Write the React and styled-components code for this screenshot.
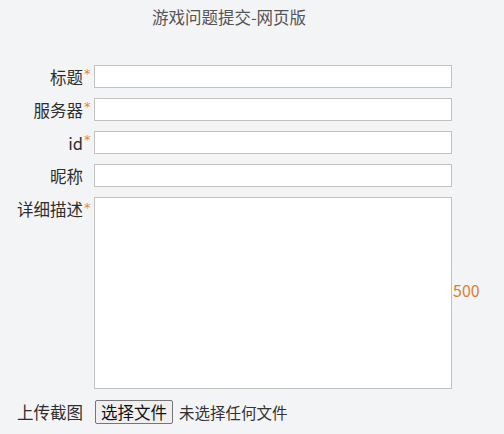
import React from "react";
import styled, { createGlobalStyle } from "styled-components";

const Global = createGlobalStyle`
  html, body { margin: 0; padding: 0; background: #f3f4f6; }
  body { font-family: "Noto Sans CJK SC", "Noto Sans", sans-serif; color: #333; }
  #root { width: 504px; min-height: 434px; background: #f3f4f6; }
`;

const Page = styled.div`
  padding-top: 6px;
`;

const Title = styled.div`
  width: 452px;
  text-align: center;
  padding-left: 6px;
  box-sizing: border-box;
  font-size: 16.5px;
  line-height: 22px;
  color: #555;
  margin-bottom: 37px;
`;

const Form = styled.div`
  display: grid;
  grid-template-columns: 83px 11px 358px auto;
  row-gap: 10px;
  align-items: center;
`;

const Label = styled.div`
  text-align: right;
  font-size: 16.5px;
  line-height: 20px;
  color: #2e2e2e;
  white-space: nowrap;
  align-self: ${(p) => (p.$top ? "start" : "center")};
  padding-top: ${(p) => (p.$top ? "2px" : "0")};
`;

const Star = styled.div`
  color: #e2843d;
  font-family: "DejaVu Sans", sans-serif;
  font-size: 13px;
  line-height: 13px;
  align-self: start;
  padding-top: ${(p) => (p.$top ? "4px" : "2px")};
  padding-left: 1px;
`;

const TextInput = styled.input`
  box-sizing: border-box;
  width: 358px;
  height: 23px;
  margin: 0;
  border: 1px solid #c2c2c2;
  background: #fff;
  outline: none;
  padding: 0 4px;
`;

const TextArea = styled.textarea`
  box-sizing: border-box;
  display: block;
  width: 358px;
  height: 192px;
  margin: 0;
  border: 1px solid #c2c2c2;
  background: #fff;
  resize: none;
  outline: none;
`;

const Counter = styled.div`
  color: #e07d2e;
  font-size: 16px;
  line-height: 18px;
  padding-left: 1px;
  margin-top: -6px;
`;

const UploadRow = styled.div`
  display: flex;
  align-items: center;
  gap: 6px;
  margin-top: 1px;
`;

const FileButton = styled.button`
  box-sizing: border-box;
  height: 24px;
  width: 78px;
  margin: 0 0 0 1px;
  padding: 0;
  font-family: "Noto Sans CJK SC", sans-serif;
  font-size: 16.5px;
  line-height: 20px;
  color: #111;
  background: #efefef;
  border: 1px solid #767676;
  border-radius: 2px;
`;

const FileHint = styled.span`
  font-size: 15.5px;
  line-height: 20px;
  color: #333;
`;

const Empty = styled.div``;

export default function App() {
  const fields = [
    { label: "标题", required: true },
    { label: "服务器", required: true },
    { label: "id", required: true },
    { label: "昵称", required: false },
  ];
  return (
    <>
      <Global />
      <Page>
        <Title>游戏问题提交-网页版</Title>
        <Form>
          {fields.map((f) => (
            <React.Fragment key={f.label}>
              <Label>{f.label}</Label>
              <Star>{f.required ? "*" : ""}</Star>
              <TextInput type="text" />
              <Empty />
            </React.Fragment>
          ))}
          <Label $top>详细描述</Label>
          <Star $top>*</Star>
          <TextArea />
          <Counter>500</Counter>
          <Label>上传截图</Label>
          <Empty />
          <UploadRow>
            <FileButton type="button">选择文件</FileButton>
            <FileHint>未选择任何文件</FileHint>
          </UploadRow>
          <Empty />
        </Form>
      </Page>
    </>
  );
}
